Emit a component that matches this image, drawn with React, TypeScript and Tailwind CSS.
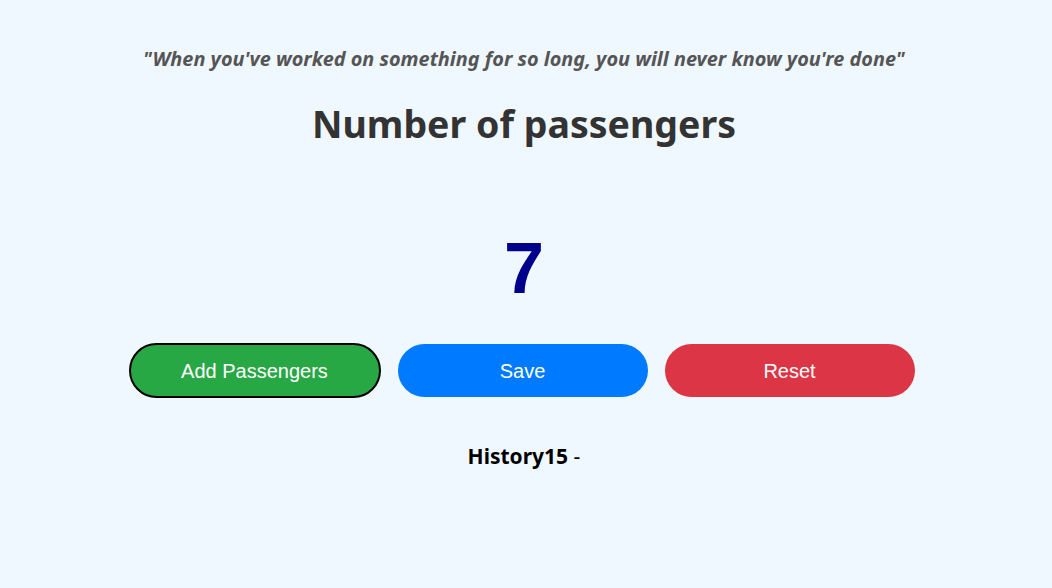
export default function App() {
  return (
    <div className="min-h-[588px] w-full bg-[#f0f8ff] font-['Noto_Sans',sans-serif]">
      <div className="flex flex-col items-center pr-[4px] pt-[44px]">
        <p className="text-[19.9px] font-bold italic leading-[30px] text-[#555]">
          "When you've worked on something for so long, you will never know you're done"
        </p>
        <h1 className="mt-[23px] text-[37.5px] font-bold leading-[54px] text-[#333]">Number of passengers</h1>
        <div className="mt-[71px] font-['Liberation_Sans',Arial,sans-serif] text-[72px] font-bold leading-[92px] text-[#00008b]">
          7
        </div>
        <div className="mt-[29px] flex gap-[17px] pr-[5px] font-['Liberation_Sans',Arial,sans-serif] text-[20px] text-white">
          <button className="h-[55px] w-[252px] rounded-full border-2 border-black bg-[#28a745]">Add Passengers</button>
          <button className="mt-px h-[53px] w-[250px] rounded-full bg-[#007bff]">Save</button>
          <button className="mt-px h-[53px] w-[250px] rounded-full bg-[#dc3545]">Reset</button>
        </div>
        <p className="mt-[43px] text-[21px] leading-[30px] text-black">
          <span className="font-bold">History15</span> -
        </p>
      </div>
    </div>
  );
}
